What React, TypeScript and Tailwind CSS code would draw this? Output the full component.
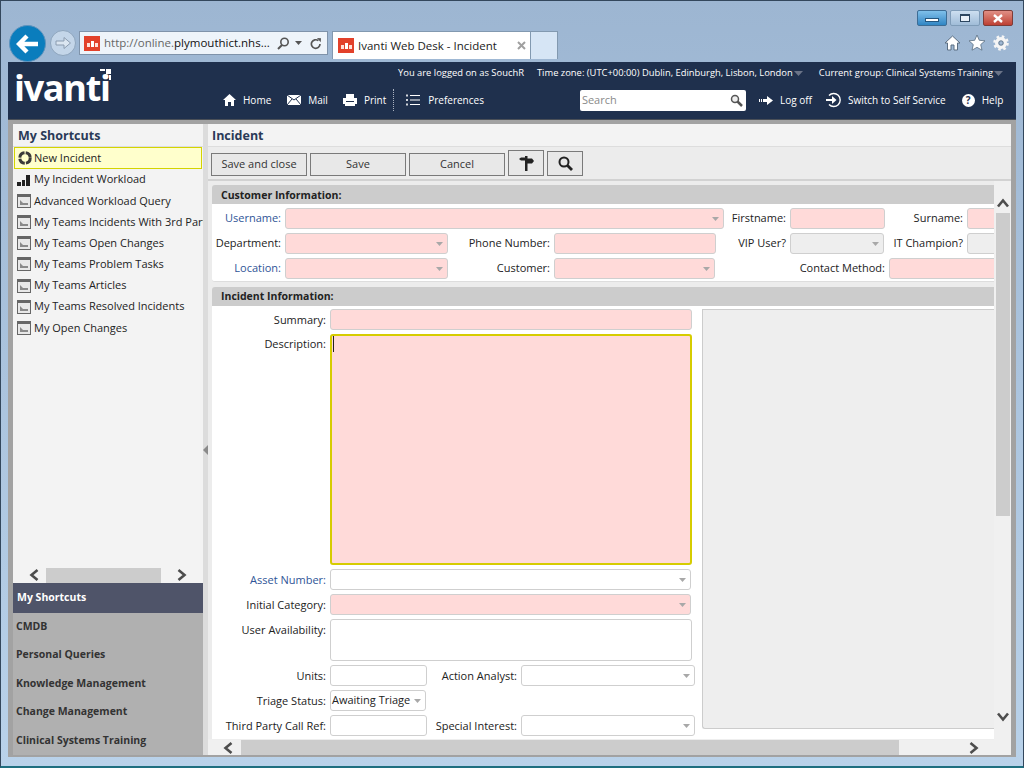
import React from "react";

const font = { fontFamily: '"Open Sans", "Noto Sans", sans-serif' };

function Caret({ className = "" }: { className?: string }) {
  return (
    <svg width="7" height="4" viewBox="0 0 7 4" className={className}>
      <path d="M0 0h7L3.5 4z" fill="#a8a8a8" />
    </svg>
  );
}

function Chev({ dir, className = "" }: { dir: "l" | "r" | "u" | "d"; className?: string }) {
  const d = {
    l: "M8.5 1L2.5 6l6 5",
    r: "M3.500 1l6 5-6 5",
    u: "M1 8.500l5-6 5 6",
    d: "M1 3.500l5 6 5-6",
  }[dir];
  return (
    <svg width="12" height="12" viewBox="0 0 12 12" className={className}>
      <path d={d} fill="none" stroke="#4d4d4d" strokeWidth="2.600" />
    </svg>
  );
}

function Label({ w, blue, low, children }: { w: string; blue?: boolean; low?: boolean; children: React.ReactNode }) {
  return (
    <div className={`${w} shrink-0 text-right pr-[4px] ${low ? "pt-[1px]" : ""} whitespace-nowrap text-[11px] leading-[20px] ${blue ? "text-[#2f5597]" : "text-[#222222]"}`}>
      {children}
    </div>
  );
}

function Field({
  w,
  tone = "pink",
  caret,
  h = "h-[21px]",
  children,
}: {
  w: string;
  tone?: "pink" | "white" | "grey";
  caret?: boolean;
  h?: string;
  children?: React.ReactNode;
}) {
  const bg = tone === "pink" ? "bg-[#ffdad9]" : tone === "grey" ? "bg-[#eeeeee]" : "bg-white";
  return (
    <div className={`${w} ${h} ${bg} shrink-0 border border-[#cfcfcf] rounded-[3px] flex items-center justify-between pl-[1px] pr-[4px] text-[11px] overflow-hidden text-[#222222]`}>
      <span className="whitespace-nowrap">{children}</span>
      {caret && <Caret className="shrink-0" />}
    </div>
  );
}

function QueryIcon() {
  return (
    <svg width="14" height="14" viewBox="0 0 14 14" className="shrink-0">
      <rect x="0.5" y="0.5" width="13" height="13" fill="#e8e8e8" stroke="#666666" />
      <rect x="1" y="1" width="12" height="2" fill="#666666" />
      <path d="M3 11V6l2 2 1 1h5v2z" fill="#8a8a8a" />
    </svg>
  );
}

function Shortcut({ icon, children }: { icon?: React.ReactNode; children: React.ReactNode }) {
  return (
    <div className="h-[21.2px] flex items-center gap-[3px] pl-[4px] text-[11px] text-[#222222] whitespace-nowrap">
      {icon ?? <QueryIcon />}
      <span>{children}</span>
    </div>
  );
}

function Btn({ children, w = "w-[96px]", extra = "h-[23px]" }: { children: React.ReactNode; w?: string; extra?: string }) {
  return (
    <div className={`${w} ${extra} border border-[#7a7a7a] bg-[#e8e8e8] flex items-center justify-center text-[11px] text-[#333333]`}>
      {children}
    </div>
  );
}

function NavItem({ icon, children, gap = "gap-[7px]" }: { icon: React.ReactNode; children: React.ReactNode; gap?: string }) {
  return (
    <div className={`flex items-center ${gap} text-white text-[10px] whitespace-nowrap`}>
      {icon}
      <span>{children}</span>
    </div>
  );
}

function TriDown() {
  return (
    <svg width="9" height="5" viewBox="0 0 9 5" className="inline-block ml-[1px]">
      <path d="M0 0h9L4.5 5z" fill="#6b7488" />
    </svg>
  );
}

function Favicon() {
  return (
    <div className="w-[16px] h-[15px] bg-[#e2412a] flex items-end justify-center gap-[1px] pb-[4px] shrink-0">
      <div className="w-[3px] h-[4px] bg-[#ffe0d8]" />
      <div className="w-[3px] h-[6px] bg-white" />
      <div className="w-[3px] h-[4px] bg-[#ffe0d8]" />
    </div>
  );
}

function ChromeBar() {
  return (
    <div className="h-[61px] flex flex-col shrink-0">
      <div className="h-[33px] flex justify-end gap-[3px] pt-[9px] pr-[3px]">
        <div className="w-[30px] h-[16px] rounded-[2px] border border-[#3d6c94] bg-gradient-to-b from-[#7fc0ea] to-[#2f86c4] flex items-center justify-center">
          <div className="w-[14px] h-[4px] mt-[3px] bg-white border border-[#25567e]" />
        </div>
        <div className="w-[30px] h-[16px] rounded-[2px] border border-[#7f9cb8] bg-gradient-to-b from-[#cddff0] to-[#a0bcd8] flex items-center justify-center">
          <div className="w-[10px] h-[8px] border border-t-2 border-[#2c4660] bg-[#e8f0f8]" />
        </div>
        <div className="w-[30px] h-[16px] rounded-[2px] border border-[#7d3c38] bg-gradient-to-b from-[#e08f85] to-[#bd3f33] flex items-center justify-center">
          <svg width="14" height="9" viewBox="0 0 14 9"><path d="M3 1l8 7M11 1L3 8" stroke="#fff" strokeWidth="2.400" fill="none" /></svg>
        </div>
      </div>
      <div className="flex-1 flex items-start">
        <div className="w-[37px] h-[37px] rounded-full bg-[#0a7dbd] ml-[1px] -mt-[6px] flex items-center justify-center border border-[#5f93bd] shrink-0">
          <svg width="24" height="20" viewBox="0 0 24 20"><path d="M11 2L3 10l8 8M3 10h19" fill="none" stroke="#fff" strokeWidth="4.400" /></svg>
        </div>
        <div className="w-[26px] h-[26px] rounded-full border border-[#8ea5bd] bg-[#c4d6e9] ml-[4px] -mt-[1px] flex items-center justify-center shrink-0">
          <svg width="17" height="14" viewBox="0 0 17 14"><path d="M1 5h8V1.500L15.500 7 9 12.500V9H1z" fill="#dbe6f1" stroke="#8b9cb0" /></svg>
        </div>
        <div className="w-[249px] h-[24px] ml-[3px] border border-[#7f93aa] bg-[#eef4fa] flex items-center pl-[4px] shrink-0 text-[11.5px]">
          <Favicon />
          <span className="ml-[4px] w-[173px] shrink-0 text-[#666666] whitespace-nowrap">http://online.<span className="text-[#111111]">plymouthict.nhs...</span></span>
          <svg width="13" height="13" viewBox="0 0 13 13" className="shrink-0"><circle cx="7.500" cy="5" r="3.700" fill="none" stroke="#555" strokeWidth="1.600" /><path d="M5 8l-4 4" stroke="#555" strokeWidth="2" /></svg>
          <svg width="7" height="4" viewBox="0 0 7 4" className="ml-[5px] shrink-0"><path d="M0 0h7L3.500 4z" fill="#555" /></svg>
          <svg width="12" height="13" viewBox="0 0 12 13" className="ml-[8px] shrink-0"><path d="M10 7a4.300 4.300 0 1 1-1.600-3.300" fill="none" stroke="#555" strokeWidth="1.700" /><path d="M7 1l4 .3-.3 4z" fill="#555" /></svg>
        </div>
        <div className="w-[199px] h-[28px] ml-[4px] bg-white border border-[#8299b0] border-b-0 flex items-center pl-[5px] shrink-0 text-[11.5px] text-[#222222]">
          <Favicon />
          <span className="ml-[4px] w-[159px] shrink-0 whitespace-nowrap">Ivanti Web Desk - Incident</span>
          <svg width="9" height="9" viewBox="0 0 9 9" className="shrink-0"><path d="M1 1l7 7M8 1L1 8" stroke="#a0a0a0" strokeWidth="2" /></svg>
        </div>
        <div className="w-[27px] h-[28px] bg-[#d6e5f5] border-r border-t border-[#8299b0] shrink-0" />
        <div className="flex-1" />
        <div className="flex items-center gap-[7px] pr-[7px] pt-[3px]">
          <svg width="17" height="16" viewBox="0 0 17 16"><path d="M8.500 1L1 8h2.500v7h3.500v-5h3v5h3.500V8H16z" fill="#fff" stroke="#5b6e82" strokeWidth="1" /></svg>
          <svg width="18" height="17" viewBox="0 0 18 17"><path d="M9 1l2.300 5.300 5.700.5-4.300 3.800 1.300 5.600L9 13.300 4 16.200l1.300-5.600L1 6.800l5.700-.5z" fill="#fff" stroke="#5b6e82" strokeWidth="0.800" /></svg>
          <svg width="16" height="16" viewBox="0 0 16 16"><circle cx="8" cy="8" r="4.300" fill="none" stroke="#f5f5f5" strokeWidth="3.400" /><circle cx="8" cy="8" r="6.500" fill="none" stroke="#f5f5f5" strokeWidth="2.600" strokeDasharray="2.500 2.600" /><circle cx="8" cy="8" r="2.200" fill="none" stroke="#5b6e82" strokeWidth="0.800" /></svg>
        </div>
      </div>
    </div>
  );
}

function NavyHeader() {
  const i = "shrink-0";
  return (
    <div className="h-[58px] bg-[#1f304d] flex border-b border-[#4a4f57] shrink-0">
      <div className="w-[202px] shrink-0 pl-[6px] relative">
        <div className="text-white font-bold text-[36px] leading-[36px] pt-[8px] tracking-[-1.3px]">ivanti</div>
        <div className="absolute left-[90px] top-[7px] w-[13px] h-[12px]">
          <div className="absolute right-0 top-0 w-[5px] h-[5px] bg-white" />
          <div className="absolute right-[6px] top-0 w-[5px] h-[2px] bg-white" />
          <div className="absolute right-0 top-[6px] w-[2px] h-[5px] bg-white" />
        </div>
      </div>
      <div className="flex-1 flex flex-col min-w-0">
        <div className="h-[22px] flex items-center text-white text-[9.4px] whitespace-nowrap">
          <span className="ml-[188px]">You are logged on as SouchR</span>
          <span className="ml-[13px]">Time zone: (UTC+00:00) Dublin, Edinburgh, Lisbon, London<TriDown /></span>
          <span className="ml-[16px]">Current group: Clinical Systems Training<TriDown /></span>
        </div>
        <div className="flex-1 flex items-center pb-[3px]">
          <div className="ml-[13px]">
            <NavItem icon={<svg width="13" height="12" viewBox="0 0 13 12" className={i}><path d="M6.500 0L0 6h2v6h3V8h3v4h3V6h2z" fill="#fff" /></svg>}>Home</NavItem>
          </div>
          <div className="ml-[16px]">
            <NavItem icon={<svg width="14" height="10" viewBox="0 0 14 10" className={i}><rect width="14" height="10" fill="#fff" /><path d="M0 0l7 5 7-5M0 10l5-6M14 10L9 4" stroke="#1f304d" fill="none" /></svg>}>Mail</NavItem>
          </div>
          <div className="ml-[15px]">
            <NavItem icon={<svg width="14" height="12" viewBox="0 0 14 12" className={i}><path d="M3 0h8v4H3zM0 4h14v6h-2v2H2v-2H0z" fill="#fff" /><path d="M3 7.500h8" stroke="#1f304d" /></svg>}>Print</NavItem>
          </div>
          <div className="ml-[7px] h-[22px] border-l border-dotted border-[#aab2c0]" />
          <div className="ml-[12px]">
            <NavItem gap="gap-[8px]" icon={<svg width="14" height="12" viewBox="0 0 14 12" className={i}><path d="M4 1.500h10M4 6h10M4 10.500h10" stroke="#fff" /><path d="M1 .5v2M1 5v2M1 9.500v2" stroke="#fff" strokeWidth="1.600" /></svg>}>Preferences</NavItem>
          </div>
          <div className="ml-[96px] w-[166px] h-[21px] bg-white rounded-[2px] flex items-center justify-between pl-[2px] pr-[3px] text-[11px] text-[#8a8a8a]">
            <span>Search</span>
            <svg width="13" height="13" viewBox="0 0 13 13"><circle cx="5" cy="5" r="3.500" fill="#eee" stroke="#555" strokeWidth="1.500" /><path d="M7.500 7.500L12 12" stroke="#555" strokeWidth="2.500" /></svg>
          </div>
          <div className="ml-[13px]">
            <NavItem gap="gap-[7px]" icon={<svg width="14" height="9" viewBox="0 0 14 9" className={i}><path d="M0 3h1v3H0zM2 3h1v3H2zM4 3h4V0l6 4.500L8 9V6H4z" fill="#fff" /></svg>}>Log off</NavItem>
          </div>
          <div className="ml-[14px]">
            <NavItem gap="gap-[6px]" icon={<svg width="16" height="16" viewBox="0 0 16 16" className={i}><path d="M3 3.500a6.500 6.500 0 1 1 0 9" fill="none" stroke="#fff" strokeWidth="1.400" /><path d="M0 7h6V4l4.500 4L6 12V9H0z" fill="#fff" /></svg>}>Switch to Self Service</NavItem>
          </div>
          <div className="ml-[16px]">
            <NavItem gap="gap-[7px]" icon={<div className="w-[13px] h-[13px] rounded-full bg-white text-[#1f304d] text-[10px] font-bold flex items-center justify-center leading-none">?</div>}>Help</NavItem>
          </div>
        </div>
      </div>
    </div>
  );
}

function Sidebar() {
  const groups = ["CMDB", "Personal Queries", "Knowledge Management", "Change Management", "Clinical Systems Training"];
  return (
    <div className="w-[190px] shrink-0 bg-[#f3f3f3] flex flex-col">
      <div className="h-[23px] flex items-center pl-[5px] pt-[2px] text-[12.5px] font-bold text-[#2a3a58] border-b border-[#dddddd] rounded-tl-[4px] shrink-0">My Shortcuts</div>
      <div className="flex-1 overflow-hidden">
        <div className="h-[22px] mx-[1px] border border-[#d4d400] bg-[#ffffcc] flex items-center gap-[2px] pl-[3px] text-[11px] text-[#222222]">
          <svg width="14" height="14" viewBox="0 0 14 14" className="shrink-0"><circle cx="7" cy="7" r="5.200" fill="none" stroke="#3a3a3a" strokeWidth="3" strokeDasharray="7 1.200" /></svg>
          <span>New Incident</span>
        </div>
        <Shortcut icon={<svg width="14" height="12" viewBox="0 0 14 12" className="shrink-0"><path d="M0 8h4v4H0zM5 6h3v6H5zM9 1h4v11H9z" fill="#222" /></svg>}>My Incident Workload</Shortcut>
        <Shortcut>Advanced Workload Query</Shortcut>
        <Shortcut>My Teams Incidents With 3rd Party</Shortcut>
        <Shortcut>My Teams Open Changes</Shortcut>
        <Shortcut>My Teams Problem Tasks</Shortcut>
        <Shortcut>My Teams Articles</Shortcut>
        <Shortcut>My Teams Resolved Incidents</Shortcut>
        <Shortcut>My Open Changes</Shortcut>
      </div>
      <div className="h-[16px] flex items-center shrink-0">
        <div className="w-[33px] flex justify-center pl-[11px]"><Chev dir="l" /></div>
        <div className="w-[115px] h-[15px] bg-[#cccccc]" />
        <div className="flex-1 flex justify-center pr-[3px]"><Chev dir="r" /></div>
      </div>
      <div className="h-[29.5px] bg-[#4f5469] flex items-center pl-[4px] text-[10.5px] font-bold text-white shrink-0">My Shortcuts</div>
      <div className="bg-[#b0b0b0] shrink-0">
        {groups.map((g) => (
          <div key={g} className="h-[28.5px] flex items-center pl-[3px] text-[10.5px] font-bold text-[#333333]">{g}</div>
        ))}
      </div>
    </div>
  );
}

function SectionHead({ pad = "", children }: { pad?: string; children: React.ReactNode }) {
  return (
    <div className={`h-[19px] ${pad} bg-[#cccccc] rounded-tl-[3px] pl-[9px] flex items-center text-[10.5px] font-bold text-[#222222] shrink-0`}>{children}</div>
  );
}

function Row({ children, className = "" }: { children: React.ReactNode; className?: string }) {
  return <div className={`flex items-start ${className}`}>{children}</div>;
}

function Form() {
  return (
    <div className="flex-1 min-w-0 min-h-0 flex flex-col bg-[#ececec] pl-[4px] pt-[4px] overflow-hidden">
      <SectionHead pad="pt-[2px]">Customer Information:</SectionHead>
      <div className="pt-[4px] flex flex-col gap-[4px] h-[78px] shrink-0 bg-white rounded-bl-[3px] border-b border-[#dddddd]">
        <Row>
          <Label w="w-[73px]" blue>Username:</Label>
          <Field w="w-[439px]" caret />
          <Label w="w-[66px]">Firstname:</Label>
          <Field w="w-[95px]" />
          <Label w="w-[82px]">Surname:</Label>
          <Field w="w-[60px]" />
        </Row>
        <Row>
          <Label w="w-[73px]">Department:</Label>
          <Field w="w-[163px]" caret />
          <Label w="w-[106px]">Phone Number:</Label>
          <Field w="w-[162px]" />
          <Label w="w-[74px]">VIP User?</Label>
          <Field w="w-[94px]" tone="grey" caret />
          <Label w="w-[83px]">IT Champion?</Label>
          <Field w="w-[60px]" tone="grey" />
        </Row>
        <Row>
          <Label w="w-[73px]" blue>Location:</Label>
          <Field w="w-[163px]" caret />
          <Label w="w-[106px]">Customer:</Label>
          <Field w="w-[161px]" caret />
          <Label w="w-[174px]">Contact Method:</Label>
          <Field w="w-[120px]" />
        </Row>
      </div>
      <div className="h-[5px] shrink-0" />
      <SectionHead>Incident Information:</SectionHead>
      <div className="flex-1 min-h-0 flex pt-[3px] bg-white">
        <div className="w-[490px] shrink-0 flex flex-col gap-[4px]">
          <Row>
            <Label low w="w-[118px]">Summary:</Label>
            <Field w="w-[362px]" />
          </Row>
          <Row>
            <Label w="w-[118px]">Description:</Label>
            <div className="w-[362px] h-[231px] bg-[#ffdad9] border-2 border-[#d6cc00] rounded-[3px] pl-[1px]">
              <div className="w-[1px] h-[16px] bg-[#222222]" />
            </div>
          </Row>
          <Row>
            <Label low w="w-[118px]" blue>Asset Number:</Label>
            <Field w="w-[361px]" tone="white" caret />
          </Row>
          <Row>
            <Label low w="w-[118px]">Initial Category:</Label>
            <Field w="w-[361px]" caret />
          </Row>
          <Row>
            <Label low w="w-[118px]">User Availability:</Label>
            <Field w="w-[362px]" h="h-[42px]" tone="white" />
          </Row>
          <Row>
            <Label low w="w-[118px]">Units:</Label>
            <Field w="w-[97px]" tone="white" />
            <Label low w="w-[94px]">Action Analyst:</Label>
            <Field w="w-[174px]" tone="white" caret />
          </Row>
          <Row>
            <Label low w="w-[118px]">Triage Status:</Label>
            <Field w="w-[96px]" tone="white" caret>Awaiting Triage</Field>
          </Row>
          <Row>
            <Label low w="w-[118px]">Third Party Call Ref:</Label>
            <Field w="w-[97px]" tone="white" />
            <Label low w="w-[94px]">Special Interest:</Label>
            <Field w="w-[174px]" tone="white" caret />
          </Row>
        </div>
        <div className="flex-1 h-[420px] bg-[#eeeeee] border-l border-b border-t border-[#cccccc] rounded-bl-[3px]" />
      </div>
    </div>
  );
}

function RightPane() {
  return (
    <div className="flex-1 min-w-0 flex flex-col bg-[#f0f0f0]">
      <div className="h-[23px] bg-[#f3f3f3] flex items-center pl-[4px] pt-[2px] text-[12.5px] font-bold text-[#2a3a58] border-b border-[#dddddd] shrink-0 rounded-tr-[4px]">Incident</div>
      <div className="h-[34px] bg-[#ececec] border-b-2 border-[#d2d2d2] flex items-start gap-[3px] pl-[3px] pt-[6px] shrink-0">
        <Btn>Save and close</Btn>
        <Btn>Save</Btn>
        <Btn>Cancel</Btn>
        <Btn w="w-[36px]" extra="h-[26px] -mt-[3px]">
          <svg width="15" height="15" viewBox="0 0 15 15"><path d="M6 0h2.500v2.500H13l2 2.500-2 2.500H8.500V15H6V4.500H2L0 3l2-1.500h4z" fill="#222" /></svg>
        </Btn>
        <Btn w="w-[36px]" extra="h-[25px] -mt-[2px]">
          <svg width="15" height="15" viewBox="0 0 15 15"><circle cx="6" cy="6" r="4.500" fill="none" stroke="#222" strokeWidth="2" /><path d="M9.500 9.500L14 14" stroke="#222" strokeWidth="2.800" /></svg>
        </Btn>
      </div>
      <div className="flex-1 min-h-0 flex">
        <div className="flex-1 min-w-0 flex flex-col">
          <Form />
          <div className="h-[16px] flex items-center shrink-0 border-t border-[#eeeeee]">
            <div className="w-[33px] flex justify-center pl-[9px]"><Chev dir="l" /></div>
            <div className="w-[658px] h-[15px] bg-[#cccccc]" />
            <div className="flex-1 flex justify-center pl-[53px]"><Chev dir="r" /></div>
          </div>
        </div>
        <div className="w-[17px] shrink-0 flex flex-col items-center bg-[#f0f0f0]">
          <div className="h-[32px] flex items-end pb-[3px]"><Chev dir="u" /></div>
          <div className="w-[14px] h-[303px] bg-[#cccccc]" />
          <div className="flex-1 flex items-start pt-[194px]"><Chev dir="d" /></div>
        </div>
      </div>
    </div>
  );
}

export default function App() {
  return (
    <div className="w-[1024px] h-[768px] overflow-hidden flex flex-col border border-[#33475c] border-b-2 border-b-[#1f6f80] bg-gradient-to-b from-[#9db6d2] to-[#b9d2ea]" style={font}>
      <div className="flex-1 min-h-0 flex flex-col pl-[7px] pr-[7px] pb-[9px]">
        <ChromeBar />
        <NavyHeader />
        <div className="flex-1 min-h-0 flex bg-[#a2a2a2] pt-[4px] pb-[2px] pl-[5px] pr-[5px]">
          <Sidebar />
          <div className="w-[5px] shrink-0 bg-[#dcdcdc] pt-[321px]">
            <svg width="5" height="10" viewBox="0 0 5 10"><path d="M5 0v10L0 5z" fill="#8a8a8a" /></svg>
          </div>
          <RightPane />
        </div>
      </div>
    </div>
  );
}
